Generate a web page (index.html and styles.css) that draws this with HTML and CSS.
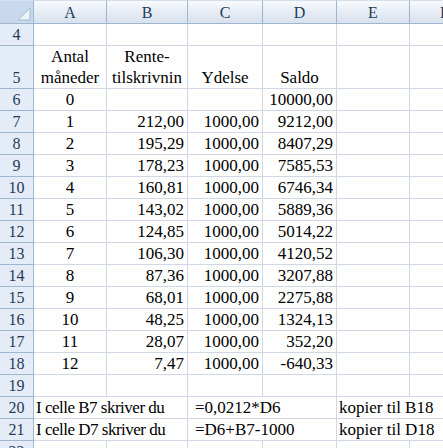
FILE: index.html
```html
<!DOCTYPE html>
<html>
<head>
<meta charset="utf-8">
<link rel="stylesheet" href="styles.css">
</head>
<body>
<div class="sheet">
  <div class="corner"><svg class="tri" width="14" height="14" viewBox="0 0 14 14"><path d="M13 1 L13 13 L1 13 Z" fill="#eef3f9" stroke="#a3b8d2" stroke-width="1"/></svg></div>
  <div class="ch">A</div><div class="ch">B</div><div class="ch">C</div><div class="ch">D</div><div class="ch">E</div><div class="ch">F</div>

  <div class="rh">4</div><div class="c"></div><div class="c"></div><div class="c"></div><div class="c"></div><div class="c"></div><div class="c"></div>

  <div class="rh">5</div>
  <div class="c ctr wrap">Antal<br>måneder</div>
  <div class="c ctr wrap clip">Rente-<br>tilskrivnin</div>
  <div class="c ctr">Ydelse</div>
  <div class="c ctr">Saldo</div>
  <div class="c"></div><div class="c"></div>

  <div class="rh">6</div><div class="c ctr">0</div><div class="c"></div><div class="c"></div><div class="c num">10000,00</div><div class="c"></div><div class="c"></div>
  <div class="rh">7</div><div class="c ctr">1</div><div class="c num">212,00</div><div class="c num">1000,00</div><div class="c num">9212,00</div><div class="c"></div><div class="c"></div>
  <div class="rh">8</div><div class="c ctr">2</div><div class="c num">195,29</div><div class="c num">1000,00</div><div class="c num">8407,29</div><div class="c"></div><div class="c"></div>
  <div class="rh">9</div><div class="c ctr">3</div><div class="c num">178,23</div><div class="c num">1000,00</div><div class="c num">7585,53</div><div class="c"></div><div class="c"></div>
  <div class="rh">10</div><div class="c ctr">4</div><div class="c num">160,81</div><div class="c num">1000,00</div><div class="c num">6746,34</div><div class="c"></div><div class="c"></div>
  <div class="rh">11</div><div class="c ctr">5</div><div class="c num">143,02</div><div class="c num">1000,00</div><div class="c num">5889,36</div><div class="c"></div><div class="c"></div>
  <div class="rh">12</div><div class="c ctr">6</div><div class="c num">124,85</div><div class="c num">1000,00</div><div class="c num">5014,22</div><div class="c"></div><div class="c"></div>
  <div class="rh">13</div><div class="c ctr">7</div><div class="c num">106,30</div><div class="c num">1000,00</div><div class="c num">4120,52</div><div class="c"></div><div class="c"></div>
  <div class="rh">14</div><div class="c ctr">8</div><div class="c num">87,36</div><div class="c num">1000,00</div><div class="c num">3207,88</div><div class="c"></div><div class="c"></div>
  <div class="rh">15</div><div class="c ctr">9</div><div class="c num">68,01</div><div class="c num">1000,00</div><div class="c num">2275,88</div><div class="c"></div><div class="c"></div>
  <div class="rh">16</div><div class="c ctr">10</div><div class="c num">48,25</div><div class="c num">1000,00</div><div class="c num">1324,13</div><div class="c"></div><div class="c"></div>
  <div class="rh">17</div><div class="c ctr">11</div><div class="c num">28,07</div><div class="c num">1000,00</div><div class="c num">352,20</div><div class="c"></div><div class="c"></div>
  <div class="rh">18</div><div class="c ctr">12</div><div class="c num">7,47</div><div class="c num">1000,00</div><div class="c num">-640,33</div><div class="c"></div><div class="c"></div>
  <div class="rh">19</div><div class="c"></div><div class="c"></div><div class="c"></div><div class="c"></div><div class="c"></div><div class="c"></div>

  <div class="rh">20</div><div class="c txt spill lbl">I celle B7 skriver du</div><div class="c"></div><div class="c txt spill formula">=0,0212*D6</div><div class="c"></div><div class="c txt spill">kopier til B18</div><div class="c"></div>
  <div class="rh">21</div><div class="c txt spill lbl">I celle D7 skriver du</div><div class="c"></div><div class="c txt spill formula">=D6+B7-1000</div><div class="c"></div><div class="c txt spill">kopier til D18</div><div class="c"></div>
  <div class="rh">22</div><div class="c"></div><div class="c"></div><div class="c"></div><div class="c"></div><div class="c"></div><div class="c"></div>
</div>
</body>
</html>
```
FILE: styles.css
```css
html, body {
  margin: 0;
  padding: 0;
  background: #ffffff;
  overflow: hidden;
}

.sheet {
  display: grid;
  grid-template-columns: 34px 73px 81px 75px 74px 73px 70px;
  grid-template-rows: 24px 22px 43px repeat(17, 22px);
  width: 480px;
  font-family: "Liberation Serif", "Times New Roman", serif;
  font-size: 17px;
  line-height: 21px;
  color: #000;
}

.sheet > div {
  box-sizing: border-box;
}

.corner {
  position: relative;
  background: #c9d9ed;
  border-top: 1px solid #d5e0ee;
  border-right: 1px solid #9eb6ce;
  border-bottom: 1px solid #9eb6ce;
}

.tri {
  position: absolute;
  right: 2px;
  bottom: 2px;
}

.ch {
  background: linear-gradient(#f8fafd, #e4ebf4 55%, #d8e1ed);
  border-top: 1px solid #d5e0ee;
  border-right: 1px solid #9eb6ce;
  border-bottom: 1px solid #9eb6ce;
  display: flex;
  align-items: flex-end;
  justify-content: center;
  font-size: 16px;
  color: #243b58;
}

.rh {
  background: #e4ecf7;
  border-right: 1px solid #9eb6ce;
  border-bottom: 1px solid #9eb6ce;
  display: flex;
  align-items: flex-end;
  justify-content: center;
  font-size: 16px;
  color: #243b58;
}

.c {
  border-right: 1px solid #d0d7e5;
  border-bottom: 1px solid #d0d7e5;
  display: flex;
  align-items: flex-end;
  white-space: nowrap;
}

.ctr {
  justify-content: center;
  text-align: center;
}

.wrap {
  white-space: normal;
}

.clip {
  overflow: hidden;
}

.num {
  justify-content: flex-end;
  padding-right: 3px;
}

.txt {
  padding-left: 2px;
}

.spill {
  border-right: none;
  overflow: visible;
  position: relative;
  z-index: 1;
}

.lbl {
  letter-spacing: -0.5px;
}

.formula {
  padding-left: 7px;
}
```
